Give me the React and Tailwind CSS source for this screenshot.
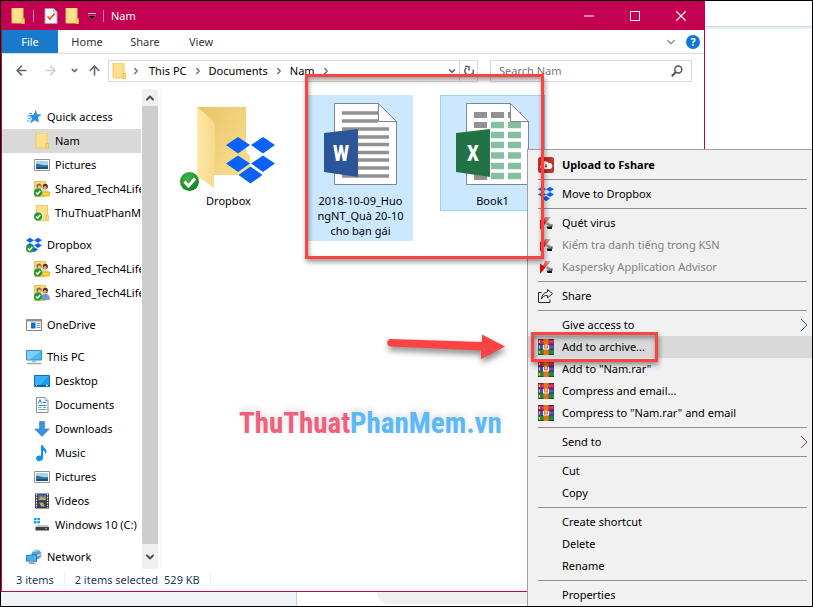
import { useState } from 'react';
import {
    ArrowLeft,
    ArrowRight,
    ArrowUp,
    ChevronDown,
    ChevronRight,
    ChevronUp,
    Minus,
    X,
} from 'lucide-react';

function FolderIcon() {
    return (
        <svg width="16" height="16" viewBox="0 0 16 16">
            <path d="M2 0h11v15H2z" fill="#fce08c" stroke="#f0c95c" />
            <path d="M12 10.5h2.5V16H12z" fill="#f8d56f" stroke="#e7b93f" strokeWidth=".7" />
        </svg>
    );
}

function CheckBadge() {
    return (
        <g>
            <circle cx="4" cy="11.5" r="4" fill="#1f9a35" />
            <path d="M2 11.5l1.6 1.7L6.2 10" stroke="#fff" strokeWidth="1.4" fill="none" />
        </g>
    );
}

function SyncedFolderIcon() {
    return (
        <svg width="16" height="16" viewBox="0 0 16 16">
            <path d="M2.5 .5h11v15h-11z" fill="#fce08c" stroke="#f0c95c" />
            <path d="M12 10.5h2.5V16H12z" fill="#f8d56f" stroke="#e7b93f" strokeWidth=".7" />
            <CheckBadge />
        </svg>
    );
}

function SharedFolderIcon({ person }) {
    return (
        <svg width="16" height="16" viewBox="0 0 16 16">
            <path d="M.5 .5h11v15H.5z" fill="#fbdb78" stroke="#ecc04c" />
            <circle cx="5" cy="5" r="2.6" fill="#8c6d55" />
            <circle cx="5.3" cy="6" r="1.6" fill="#efc7a0" />
            <circle cx="11.3" cy="5.4" r="2.6" fill="#4a3526" />
            <circle cx="11" cy="6.6" r="1.7" fill="#dba77c" />
            <path d="M7 13c0-3 2-4 4.300-4s4.500 1 4.500 5v1H8z" fill={person ? '#6b9bd1' : '#cfd6dc'} />
            {!person && <path d="M8.500 11h7v4h-7z" fill="#ffd83b" stroke="#dba514" strokeWidth=".7" />}
            <CheckBadge />
        </svg>
    );
}

function DropboxIcon({ synced = false }) {
    return (
        <svg width="16" height="16" viewBox="0 0 16 16">
            <path
                d="M4 .8L8 3.200 4 5.700 0 3.200zM12 .8l4 2.400-4 2.500-4-2.500zM4 6l4 2.500L4 11 0 8.500zM12 6l4 2.500-4 2.500-4-2.500zM8 10l4 2.600L8 15.200l-4-2.600z"
                fill="#0a62fb"
            />
            {synced && <CheckBadge />}
        </svg>
    );
}

function QuickAccessIcon() {
    return (
        <svg width="16" height="16" viewBox="0 0 16 16">
            <path d="M10 .8l1 4.500 4.700.2-3.800 2.900 1 5.100-4.200-2.300-4.500 3.400 1.800-5.300L3 6.200l4.500-.5z" fill="#2b8fdc" />
            <path d="M3 4.500h3M1 7h4M2 9.500h3M1 12h3" stroke="#4aa5e8" />
        </svg>
    );
}

function PicturesIcon() {
    return (
        <svg width="16" height="16" viewBox="0 0 16 16">
            <path d="M.5 2.500h15v11H.5z" fill="#fff" stroke="#8b939b" />
            <path d="M2 4h12v8H2z" fill="#a9d5f5" />
            <path d="M2 7c3-1 5 2 12 1v4H2z" fill="#2c7691" />
            <path d="M2 10.500c4-1 8 .5 12-.5v2H2z" fill="#1c4d7d" />
        </svg>
    );
}

function OneDriveIcon() {
    return (
        <svg width="16" height="16" viewBox="0 0 16 16">
            <path d="M.5 2.500h15v11H.5z" fill="#fff" stroke="#7d8288" />
            <path d="M0 2h16v2.500H0z" fill="#8b9198" />
            <path d="M5 5.500h4.500v6H5z" fill="#0f6fd0" />
            <path d="M10.500 6.500h4M10.500 8.500h4M10.500 10.500h4" stroke="#8b9198" />
        </svg>
    );
}

function ComputerIcon() {
    return (
        <svg width="16" height="16" viewBox="0 0 16 16">
            <path d="M.5 1.500h15v9.500H.5z" fill="#4db7f0" stroke="#3c8dbf" />
            <path d="M1 2h14L4 10.500H1z" fill="#7bd0fa" />
            <path d="M6 11.500h4v1.500H6z" fill="#9fb1bf" />
            <path d="M1 14.500h14" stroke="#8fa5b8" strokeWidth="1.500" />
        </svg>
    );
}

function DesktopIcon() {
    return (
        <svg width="16" height="16" viewBox="0 0 16 16">
            <path d="M.5 2.500h15v11H.5z" fill="#1b9df2" stroke="#1069b5" />
            <path d="M1 3h14L6 12H1z" fill="#37b1fb" />
            <path d="M1 12.500h14" stroke="#0c4f8d" />
            <path d="M2 12.500h1M12 12.500h2" stroke="#fff" />
        </svg>
    );
}

function DocumentsIcon() {
    return (
        <svg width="16" height="16" viewBox="0 0 16 16">
            <path d="M2.500 .5h8.500l3 3v12H2.500z" fill="#fff" stroke="#8a8f94" />
            <path d="M11 .5v3h3" fill="#e8ecef" stroke="#8a8f94" strokeWidth=".8" />
            <path d="M4.500 6.500L6 2.500l1.500 4M8.500 5.500h4M4.500 8.500h8" stroke="#2f86cc" fill="none" />
            <path d="M4.500 10.500h3M4.500 12.500h8M9 10.500h3.500" stroke="#6fa9d8" />
        </svg>
    );
}

function DownloadsIcon() {
    return (
        <svg width="16" height="16" viewBox="0 0 16 16">
            <path d="M5.500 .5h5v7.500h4.800L8 15.500.7 8h4.800z" fill="#3b92e0" stroke="#2a7dcb" strokeWidth=".6" />
        </svg>
    );
}

function MusicIcon() {
    return (
        <svg width="16" height="16" viewBox="0 0 16 16">
            <path d="M7 .3h2c.3 3 4 3.500 3.500 7-.2 1.300-.8 2-1.500 2.500.8-2.500 0-3.500-2-4.300V13c0 1.800-1.500 3-3.500 3S2 15 2 13.400c0-1.700 2-3.200 5-2.700z" fill="#1191ec" />
        </svg>
    );
}

function VideosIcon() {
    return (
        <svg width="16" height="16" viewBox="0 0 16 16">
            <path d="M1 .5h14v15H1z" fill="#33373b" />
            <path d="M4 1.500h8v6H4z" fill="#3c6fc0" />
            <path d="M4 8.500h8v6H4z" fill="#23407c" />
            <path d="M5 6l2-3 2 2 2-2 1 4H5zM5 9.500h4l2 4H7z" fill="#d8a03c" />
            <path d="M2.500 1v14M13.500 1v14" stroke="#fff" strokeWidth="1.300" strokeDasharray="1.500 1.200" />
        </svg>
    );
}

function DriveIcon() {
    return (
        <svg width="16" height="16" viewBox="0 0 16 16">
            <path d="M0 1h2.600v2.300H0zM3.400 1H6v2.300H3.400zM0 4.100h2.600v2.300H0zM3.400 4.100H6v2.300H3.400z" fill="#10a3e8" />
            <path d="M3 8h10.500l1.500 2H1.500z" fill="#c4c8cb" />
            <path d="M1.500 10H15v3.500H1.500z" fill="#3b3f42" />
            <path d="M11 11.500h2" stroke="#39e05a" />
        </svg>
    );
}

function NetworkIcon() {
    return (
        <svg width="16" height="16" viewBox="0 0 16 16">
            <circle cx="10.500" cy="5.500" r="5" fill="#5f9fc6" />
            <path d="M7 3c2-2 4-1 5-2M8 8c3-3 4 0 7-3" stroke="#b9dcec" strokeWidth="1.500" fill="none" />
            <path d="M.5 6.500l10-.8v7l-10-.6z" fill="#49b2ee" stroke="#2b7db6" />
            <path d="M4 12.500h3v1.500H4zM2.500 14.500h7" fill="#7f97a8" stroke="#8fa5b8" />
        </svg>
    );
}

function FshareIcon() {
    return (
        <svg width="16" height="16" viewBox="0 0 16 16">
            <rect width="16" height="16" rx="2.500" fill="#bf3426" />
            <path d="M4.500 12a2.400 2.400 0 0 1-.6-4.600A3.500 3.500 0 0 1 10.400 6 3 3 0 0 1 12 12z" fill="#fff" />
            <path d="M8 7v2M7 9l1 1.300L9 9z" stroke="#bf3426" fill="#bf3426" />
        </svg>
    );
}

function KasperskyIcon() {
    return (
        <svg width="16" height="16" viewBox="0 0 16 16">
            <defs>
                <linearGradient id="kArm" x1="0" y1="1" x2="1" y2="0">
                    <stop offset=".2" stopColor="#e01010" />
                    <stop offset="1" stopColor="#dfb5b0" />
                </linearGradient>
                <linearGradient id="kLeg" x1="0" y1="0" x2="0" y2="1">
                    <stop offset="0" stopColor="#c9cccd" />
                    <stop offset="1" stopColor="#6c7072" />
                </linearGradient>
            </defs>
            <path d="M7 2h6L3 14l-1 .5z" fill="url(#kArm)" />
            <path d="M2 4.500l5 3.500-5 6.500z" fill="#dd0b10" />
            <path d="M7.500 9l2-2.500L14 10v1.500h-3z" fill="url(#kLeg)" />
            <path d="M8.500 11.500H14V14H9.500z" fill="#101214" />
            <path d="M14 9v3" stroke="#333" strokeWidth=".8" />
        </svg>
    );
}

function ShareIcon() {
    return (
        <svg width="16" height="16" viewBox="0 0 16 16" fill="none" stroke="#222">
            <path d="M3.500 4.500h-3v10h11.500v-3" />
            <path d="M9.500 1.500l5 4.200-5 4.200V7.500C6.500 7.300 4.500 8.500 3.500 11c.2-4 2.500-6.500 6-7z" />
        </svg>
    );
}

function RarIcon() {
    return (
        <svg width="16" height="16" viewBox="0 0 16 16">
            <path d="M0 0h16v5H0z" fill="#c2255c" />
            <path d="M0 5h16v5.500H0z" fill="#3f46a8" />
            <path d="M0 10.500h16V16H0z" fill="#1c8c36" />
            <path d="M0 .5h16M0 5.200h16M0 10.600h16M0 15.500h16" stroke="#4a2540" strokeWidth=".8" />
            <path d="M1.500 1.500v2.500M1.500 6.500v3M1.500 12v2.500" stroke="#f2d64b" strokeWidth="1.200" />
            <path d="M3.500 2.800h2M11 2.800h4M11 8h4" stroke="#ef7aa0" strokeWidth=".6" />
            <path d="M5.500 0h5v16h-5z" fill="#e2731d" />
            <path d="M5.500 6v4h5V6M8 5.500v3" stroke="#f4f4f4" strokeWidth="1.200" fill="none" />
        </svg>
    );
}

function ChecklistIcon() {
    return (
        <svg width="14" height="16" viewBox="0 0 14 16">
            <path d="M1 .5h8.500L13 4v11.500H1z" fill="#f6f8fa" stroke="#a8a3ad" />
            <path d="M9.500 .5V4H13" fill="#d9dde1" stroke="#a8a3ad" strokeWidth=".7" />
            <path d="M3.500 8.500l2.500 2.500L10.500 5.500" stroke="#e8541e" strokeWidth="1.700" fill="none" />
        </svg>
    );
}

function RefreshIcon() {
    return (
        <svg width="12" height="12" viewBox="0 0 12 12" fill="none" stroke="#666" strokeWidth="1.500">
            <path d="M3.200 3a4.200 4.200 0 1 0 6.800 1.500" />
            <path d="M2 1.500h4v4" />
        </svg>
    );
}

function SearchIcon() {
    return (
        <svg width="12" height="12" viewBox="0 0 12 12" fill="none" stroke="#555" strokeWidth="1.500">
            <circle cx="7.300" cy="4.500" r="3.500" />
            <path d="M4.800 7L.8 11.200" strokeWidth="2" />
        </svg>
    );
}

function DropboxFolderArt() {
    return (
        <svg width="97" height="86" viewBox="0 0 97 86">
            <defs>
                <linearGradient id="folderBack" x1="0" y1="0" x2="1" y2="1">
                    <stop offset="0" stopColor="#e8c468" />
                    <stop offset="1" stopColor="#fae08e" />
                </linearGradient>
                <linearGradient id="folderFlap" x1="0" y1="0" x2="1" y2="0">
                    <stop offset="0" stopColor="#ffe9a6" />
                    <stop offset="1" stopColor="#f7d889" />
                </linearGradient>
                <radialGradient id="badge" cx=".4" cy=".3" r=".8">
                    <stop offset="0" stopColor="#3fb54a" />
                    <stop offset="1" stopColor="#0c7d1d" />
                </radialGradient>
            </defs>
            <path d="M17 2h49v45l4 4v19H17z" fill="url(#folderBack)" />
            <path d="M17 2l13 11c3 3 5 5 5 9v36l-1 3v22L17 71z" fill="url(#folderFlap)" />
            <path
                d="M58 32l12 8-12 8.500L46 40zM83 32l12 8-12 8.500L71 40zM58 50.500l12 8-12 8.500-12-8.500zM83 50.500l12 8-12 8.500-12-8.500zM70.500 61.500l12 8.500-12 8.500L58.500 70z"
                fill="#0a62fb"
            />
            <circle cx="9.500" cy="76.500" r="9.500" fill="url(#badge)" />
            <path d="M4.500 76.500l4 4.500 6.500-7.500" stroke="#fff" strokeWidth="3" fill="none" />
        </svg>
    );
}

function WordArt() {
    return (
        <svg width="74" height="84" viewBox="0 0 74 84">
            <path d="M10.500 .5h44l18 18v63h-62z" fill="#fff" stroke="#7d8794" />
            <path
                d="M18 10h36M18 18h36M18 26h47M18 34h47M18 41.500h47M18 49.500h47M18 57h47M18 65h47M18 73h47"
                stroke="#919191"
                strokeWidth="3.500"
            />
            <path d="M54.500 .5v18h18z" fill="#fff" stroke="#7d8794" />
            <path d="M0 30l34-4v48L0 69z" fill="#2a5599" />
            <text x="17" y="58" textAnchor="middle" fontFamily="Roboto Condensed, Open Sans" fontWeight="700" fontSize="22" fill="#fff">W</text>
        </svg>
    );
}

function ExcelArt() {
    return (
        <svg width="74" height="84" viewBox="0 0 74 84">
            <path d="M10.500 .5h44l18 18v63h-62z" fill="#fff" stroke="#7d8794" />
            <path d="M18 12h13M35 12h13M52 12h13M18 22h13M18 74h13" stroke="#919191" strokeWidth="6" />
            <path
                d="M35 22h13M52 22h13M35 32h13M52 32h13M35 42h13M52 42h13M35 52.500h13M52 52.500h13M35 63h13M52 63h13M35 73h13M52 73h13"
                stroke="#86bf9f"
                strokeWidth="6.500"
            />
            <path d="M54.500 .5v18h18z" fill="#fff" stroke="#7d8794" />
            <path d="M0 30l34-4v48L0 69z" fill="#217346" />
            <text x="17" y="58" textAnchor="middle" fontFamily="Roboto Condensed, Open Sans" fontWeight="700" fontSize="22" fill="#fff">X</text>
        </svg>
    );
}

const tree = [
    [
        { label: 'Quick access', icon: <QuickAccessIcon />, root: true },
        { label: 'Nam', icon: <FolderIcon /> },
        { label: 'Pictures', icon: <PicturesIcon /> },
        { label: 'Shared_Tech4Life', icon: <SharedFolderIcon /> },
        { label: 'ThuThuatPhanMem', icon: <SyncedFolderIcon /> },
    ],
    [
        { label: 'Dropbox', icon: <DropboxIcon synced />, root: true },
        { label: 'Shared_Tech4Life', icon: <SharedFolderIcon /> },
        { label: 'Shared_Tech4Life', icon: <SharedFolderIcon person /> },
    ],
    [{ label: 'OneDrive', icon: <OneDriveIcon />, root: true }],
    [
        { label: 'This PC', icon: <ComputerIcon />, root: true },
        { label: 'Desktop', icon: <DesktopIcon /> },
        { label: 'Documents', icon: <DocumentsIcon /> },
        { label: 'Downloads', icon: <DownloadsIcon /> },
        { label: 'Music', icon: <MusicIcon /> },
        { label: 'Pictures', icon: <PicturesIcon /> },
        { label: 'Videos', icon: <VideosIcon /> },
        { label: 'Windows 10 (C:)', icon: <DriveIcon /> },
    ],
    [{ label: 'Network', icon: <NetworkIcon />, root: true }],
];

const menu = [
    [{ label: 'Upload to Fshare', icon: <FshareIcon />, bold: true }],
    [{ label: 'Move to Dropbox', icon: <DropboxIcon /> }],
    [
        { label: 'Quét virus', icon: <KasperskyIcon /> },
        { label: 'Kiểm tra danh tiếng trong KSN', icon: <KasperskyIcon />, disabled: true },
        { label: 'Kaspersky Application Advisor', icon: <KasperskyIcon />, disabled: true },
    ],
    [{ label: 'Share', icon: <ShareIcon /> }],
    [
        { label: 'Give access to', arrow: 'text-[#1b6f9c]' },
        { label: 'Add to archive...', icon: <RarIcon />, active: true },
        { label: 'Add to "Nam.rar"', icon: <RarIcon /> },
        { label: 'Compress and email...', icon: <RarIcon /> },
        { label: 'Compress to "Nam.rar" and email', icon: <RarIcon /> },
    ],
    [{ label: 'Send to', arrow: 'text-[#9c3a3a]' }],
    [{ label: 'Cut' }, { label: 'Copy' }],
    [{ label: 'Create shortcut' }, { label: 'Delete' }, { label: 'Rename' }],
    [{ label: 'Properties' }],
];

function TitleBar() {
    return (
        <header className="flex h-[29px] items-center bg-[#c30052] pl-2 text-white">
            <FolderIcon />
            <span className="ml-[7px] h-3 w-px bg-white/50" />
            <span className="ml-2.5"><ChecklistIcon /></span>
            <span className="ml-1.5"><FolderIcon /></span>
            <svg className="ml-2" width="8" height="8" viewBox="0 0 8 8">
                <path d="M0 1.500h8" stroke="#f5b9d0" />
                <path d="M0 3.500h8L4 7.500z" fill="#000" stroke="#f5b9d0" strokeWidth=".4" />
            </svg>
            <span className="ml-[7px] h-3 w-px bg-white/50" />
            <h1 className="ml-[7px] flex-1">Nam</h1>
            <button aria-label="Minimize" className="flex h-full w-[46px] items-center justify-center">
                <Minus size={16} strokeWidth={1.5} />
            </button>
            <button aria-label="Maximize" className="flex h-full w-[46px] items-center justify-center">
                <span className="size-2.5 border border-white" />
            </button>
            <button aria-label="Close" className="flex h-full w-[46px] items-center justify-center">
                <X size={18} strokeWidth={1.5} />
            </button>
        </header>
    );
}

function RibbonTabs() {
    return (
        <nav className="flex h-6 items-center border-b border-[#dadbdc] text-[#333]">
            <button className="h-full w-14 bg-[#1979ca] text-white">File</button>
            <button className="h-full w-[58px]">Home</button>
            <button className="h-full w-[58px]">Share</button>
            <button className="h-full w-[54px]">View</button>
            <button aria-label="Expand the ribbon" className="ml-auto text-[#8a8a8a]">
                <ChevronDown size={14} />
            </button>
            <button
                aria-label="Help"
                className="mr-1 ml-2 flex size-3.5 items-center justify-center rounded-full bg-[#0a78d4] font-bold text-white"
            >
                ?
            </button>
        </nav>
    );
}

function AddressRow() {
    const [query, setQuery] = useState('');

    return (
        <div className="flex h-[35px] items-center pr-3 pb-0.5 pl-3 text-[#666]">
            <button aria-label="Back"><ArrowLeft size={15} strokeWidth={2.5} /></button>
            <button aria-label="Forward" className="ml-3.5 text-[#cfcfcf]"><ArrowRight size={15} strokeWidth={2.5} /></button>
            <button aria-label="Recent locations" className="ml-3"><ChevronDown size={9} strokeWidth={4} /></button>
            <button aria-label="Up" className="ml-2"><ArrowUp size={15} strokeWidth={2.5} /></button>
            <div className="ml-1.5 flex h-[22px] flex-1 items-center border border-[#d9d9d9] pl-0.5 text-black">
                <FolderIcon />
                <ChevronRight className="mx-1 text-[#666]" size={10} strokeWidth={3} />
                <button className="ml-1">This PC</button>
                <ChevronRight className="mx-1.5 text-[#666]" size={10} strokeWidth={3} />
                <button>Documents</button>
                <ChevronRight className="mx-1.5 text-[#666]" size={10} strokeWidth={3} />
                <button>Nam</button>
                <ChevronRight className="mx-1.5 text-[#666]" size={10} strokeWidth={3} />
                <button aria-label="Previous locations" className="mr-0.5 ml-auto text-[#666]"><ChevronDown size={10} strokeWidth={4} /></button>
                <button aria-label="Refresh" className="flex h-full w-[18px] items-center justify-center border-l border-[#d9d9d9]">
                    <RefreshIcon />
                </button>
            </div>
            <label className="ml-3 flex h-[22px] w-[202px] items-center border border-[#d9d9d9] px-2">
                <input
                    aria-label="Search Nam"
                    placeholder="Search Nam"
                    value={query}
                    onChange={(e) => setQuery(e.target.value)}
                    className="min-w-0 flex-1 bg-transparent outline-none placeholder:text-[#767676]"
                />
                <SearchIcon />
            </label>
        </div>
    );
}

function Sidebar({ selected, onSelect }) {
    return (
        <aside className="flex w-[159px] shrink-0 border-r border-[#f4f4f4]">
            <div className="flex w-[139px] flex-col gap-2 overflow-hidden pt-4">
                {tree.map((group, g) => (
                    <div key={g}>
                        {group.map((item, i) => (
                            <button
                                key={i}
                                onClick={() => onSelect(g + '-' + i)}
                                className={
                                    'flex h-6 w-full items-center gap-[5px] whitespace-nowrap ' +
                                    (item.root ? 'pl-6 ' : 'pl-8 ') +
                                    (selected === g + '-' + i ? 'bg-[#d9d9d9]' : '')
                                }
                            >
                                <span className="shrink-0">{item.icon}</span>
                                {item.label}
                            </button>
                        ))}
                    </div>
                ))}
            </div>
            <div className="ml-px flex w-4 flex-col items-center justify-between bg-[#cdcdcd] text-[#505050]">
                <button aria-label="Scroll up" className="flex h-[17px] w-full items-center justify-center bg-[#f0f0f0]">
                    <ChevronUp size={12} strokeWidth={4} />
                </button>
                <button aria-label="Scroll down" className="flex h-[25px] w-full items-center justify-center bg-[#f0f0f0]">
                    <ChevronDown size={12} strokeWidth={4} />
                </button>
            </div>
        </aside>
    );
}

function FileGrid() {
    return (
        <main className="relative flex flex-1 items-start gap-[27px] pt-1.5 pl-[15px] leading-[15px]">
            <button className="flex w-[105px] shrink-0 flex-col items-center gap-0.5 border border-transparent pt-[9px]">
                <DropboxFolderArt />
                <span>Dropbox</span>
            </button>
            <button className="flex w-[105px] shrink-0 flex-col items-center gap-1.5 border border-[#cce8ff] bg-[#cce8ff] pt-[7px] pb-0.5">
                <WordArt />
                <span className="whitespace-nowrap">
                    2018-10-09_Huo<br />ngNT_Quà 20-10<br />cho bạn gái
                </span>
            </button>
            <button className="flex w-[105px] shrink-0 flex-col items-center gap-1.5 border border-[#99d1ff] bg-[#cce8ff] pt-[7px] pb-0.5">
                <ExcelArt />
                <span>Book1</span>
            </button>
            {/* site watermark */}
            <p className="absolute top-[316px] left-[78px] font-['Liberation_Sans_Narrow','Roboto_Condensed','Liberation_Sans',sans-serif] text-[29px] leading-9 font-bold whitespace-nowrap text-[#5bbaf6] [text-shadow:0_-3px_6px_#0002]">
                <span className="text-[#f0607c]">ThuThuat</span>PhanMem.vn
            </p>
        </main>
    );
}

function ContextMenu() {
    return (
        <div role="menu" className="absolute top-[148px] right-0 w-[285px] border-t border-l border-[#a0a0a0] bg-[#f1f1f1] pt-1 text-black">
            {menu.map((group, g) => (
                <div key={g}>
                    {g > 0 && <hr className="my-[3px] mr-[5px] ml-2.5 border-[#919191]" />}
                    {group.map((item) => (
                        <button
                            key={item.label}
                            role="menuitem"
                            disabled={item.disabled}
                            className={
                                'flex h-[22px] w-full items-center gap-2 pr-1 pl-2.5 whitespace-nowrap ' +
                                (item.active ? 'bg-[#d9d9d9] ' : '') +
                                (item.bold ? 'font-bold ' : '') +
                                (item.disabled ? 'text-[#808080]' : '')
                            }
                        >
                            <span className="size-4 shrink-0">{item.icon}</span>
                            {item.label}
                            {item.arrow && (
                                <svg className={'ml-auto ' + item.arrow} width="8" height="14" viewBox="0 0 8 14" fill="none" stroke="currentColor">
                                    <path d="M1 1l6 6-6 6" />
                                </svg>
                            )}
                        </button>
                    ))}
                </div>
            ))}
        </div>
    );
}

function Annotations() {
    return (
        <>
            <div className="pointer-events-none absolute top-[73px] left-[304px] h-[185px] w-[239px] border-3 border-[#fb4343] shadow-[1px_3px_5px_#0006,inset_1px_3px_5px_#0006]" />
            <div className="pointer-events-none absolute top-[331px] left-[530px] h-[30px] w-[127px] border-3 border-[#fb4343] shadow-[1px_3px_5px_#0006,inset_1px_3px_5px_#0006]" />
            <svg className="pointer-events-none absolute top-[331px] left-[384px] drop-shadow-[1px_4px_3px_#0007]" width="122" height="30" viewBox="0 0 122 30">
                <path d="M6 7a3 3 0 0 0 0 7.500L96 18.500V27l24-12.500L97 2.500V10z" fill="#fb4343" />
            </svg>
        </>
    );
}

export default function App() {
    const [selected, setSelected] = useState('0-1');

    return (
        <div className="relative flex min-h-screen flex-col overflow-hidden border border-black bg-white font-['Noto_Sans','Open_Sans',sans-serif] text-[11px] leading-4 text-black">
            <div className="flex flex-1">
                <div className="flex min-w-0 flex-1 flex-col border-x border-b border-[#c30052] bg-white">
                    <TitleBar />
                    <RibbonTabs />
                    <AddressRow />
                    <div className="flex flex-1">
                        <Sidebar selected={selected} onSelect={setSelected} />
                        <FileGrid />
                    </div>
                    <footer className="flex h-[22px] items-center pl-3.5 text-[#1e395b]">
                        <span>3 items</span>
                        <span className="ml-2.5 h-4 border-l border-[#f0f0f0] pl-2.5">2 items selected</span>
                        <span className="ml-1.5 border-r border-[#f0f0f0] pr-2.5">529 KB</span>
                    </footer>
                </div>
                {/* window behind the explorer */}
                <div className="w-[107px]">
                    <div className="h-[26px] border-b border-[#d6dade]" />
                    <div className="h-0.5 bg-[#e2f1fb]" />
                </div>
            </div>
            <div className="flex h-3.5">
                <div className="w-[296px] border-r border-[#c8ccd2] bg-[#f0f3f8]" />
                <div className="ml-20 h-3 flex-1 rounded-bl-xl bg-[#efeff2]" />
            </div>
            <ContextMenu />
            <Annotations />
        </div>
    );
}
